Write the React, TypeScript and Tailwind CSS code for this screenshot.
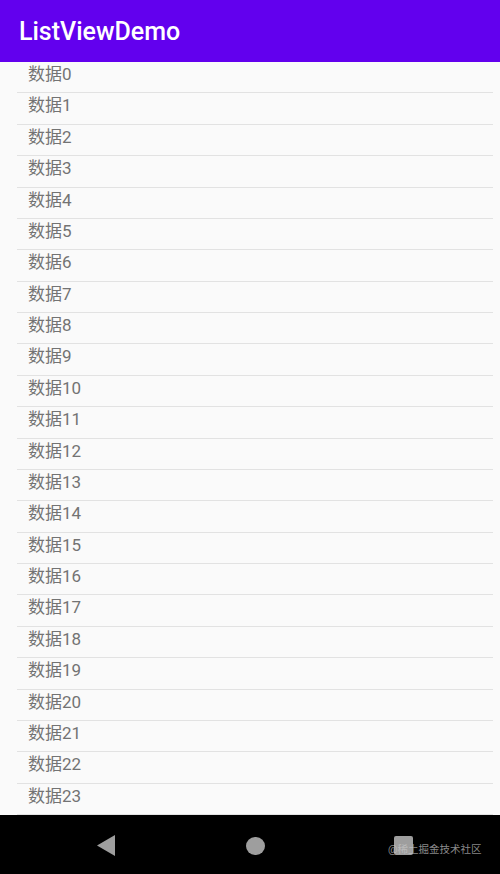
const items = Array.from({ length: 24 }, (_, i) => `数据${i}`)

export default function App() {
  return (
    <div className="relative flex h-[874px] w-[500px] flex-col overflow-hidden bg-[#fafafa] font-['Roboto','Noto_Sans_CJK_SC',sans-serif]">
      <header className="flex h-[62px] shrink-0 items-center bg-[#6200ee] pl-[19px]">
        <h1 className="text-[25px] font-medium leading-none text-white">ListViewDemo</h1>
      </header>

      <ul className="flex-1 pl-[17px] pr-[7px]">
        {items.map((item) => (
          <li key={item} className="h-[31.375px] border-b border-[#e2e2e2] pl-[11px] text-[17px] leading-[24px] text-[#737373]">
            {item}
          </li>
        ))}
      </ul>

      <nav className="relative flex h-[59px] shrink-0 items-center bg-black">
        <svg className="absolute left-[97px] top-[20px]" width="18" height="21" viewBox="0 0 18 21">
          <path d="M18 0 L18 21 L0 10.5 Z" fill="#9e9e9e" />
        </svg>
        <div className="absolute left-[246px] top-[22px] h-[18px] w-[19px] rounded-full bg-[#9e9e9e]" />
        <div className="absolute left-[394px] top-[21px] h-[19px] w-[19px] rounded-[2px] bg-[#9e9e9e]" />
        <span className="absolute left-[388px] top-[28px] text-[10.5px] leading-[14px] text-[#c8c8c8]/70">@稀土掘金技术社区</span>
      </nav>
    </div>
  )
}
